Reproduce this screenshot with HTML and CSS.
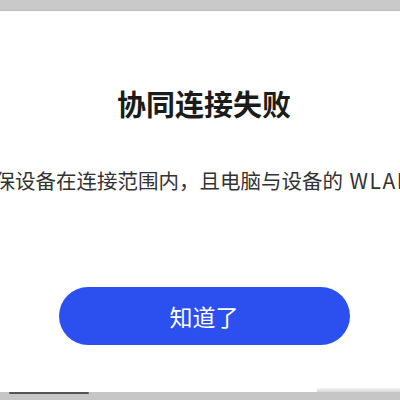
FILE: index.html
```html
<!DOCTYPE html>
<html lang="zh-CN">
<head>
<meta charset="utf-8">
<link rel="stylesheet" href="styles.css">
</head>
<body>
<div class="screen">
  <div class="topbar"></div>
  <main class="dialog">
    <h1 class="title">协同连接失败</h1>
    <p class="message">请确保设备在连接范围内，且电脑与设备的 <span class="latin">WLAN</span> 功能已开启。</p>
    <button class="btn">知道了</button>
  </main>
  <div class="bottombar">
    <div class="handle"></div>
    <div class="shade"></div>
  </div>
</div>
</body>
</html>
```
FILE: styles.css
```css
html, body {
  margin: 0;
  padding: 0;
  background: #ffffff;
}
.screen {
  width: 400px;
  height: 400px;
  overflow: hidden;
  display: flex;
  flex-direction: column;
  font-family: "Noto Sans CJK SC", "Noto Sans", sans-serif;
}
.topbar {
  height: 10px;
  background: #c9c9c9;
  border-bottom: 1px solid #bcbcbc;
  flex: none;
}
.dialog {
  flex: 1;
  display: flex;
  flex-direction: column;
  align-items: center;
  padding-left: 8px;
  min-height: 0;
}
.title {
  margin: 72px 0 0 0;
  font-size: 29px;
  line-height: 40px;
  font-weight: 700;
  color: #1b1b1b;
  white-space: nowrap;
}
.message {
  margin: 43px 0 0 0;
  align-self: flex-start;
  margin-left: -54.5px;
  font-size: 20.5px;
  line-height: 28px;
  color: #333333;
  white-space: nowrap;
}
.latin {
  font-size: 21px;
  letter-spacing: 1.5px;
  margin-left: 2px;
}
.btn {
  margin-top: 93px;
  width: 291px;
  height: 58px;
  border: none;
  border-radius: 29px;
  background: #2c50f0;
  color: #ffffff;
  font-family: "Noto Sans CJK SC", "Noto Sans", sans-serif;
  font-size: 23px;
  padding: 0;
}
.bottombar {
  flex: none;
  height: 8px;
  background: #c6c6c6;
  position: relative;
}
.handle {
  position: absolute;
  left: 9px;
  top: 0;
  width: 80px;
  height: 2px;
  background: #555555;
  border-radius: 1px;
}
.shade {
  position: absolute;
  right: 0;
  bottom: 8px;
  width: 83px;
  height: 4px;
  background: linear-gradient(#f4f4f4, #d8d8d8);
}
```
